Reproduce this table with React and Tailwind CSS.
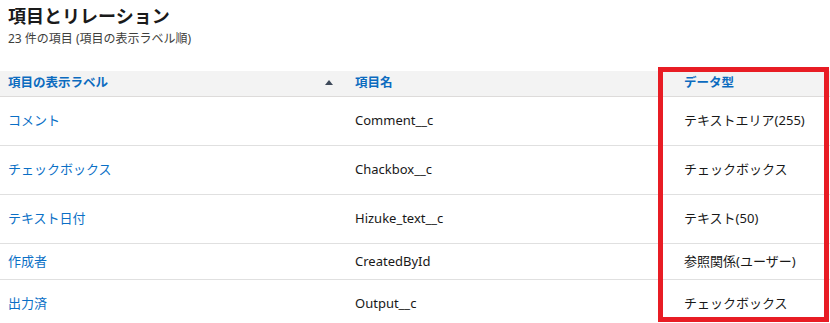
export default function App() {
  const rows = [
    { label: "コメント", api: "Comment__c", type: "テキストエリア(255)", h: "h-[49px]" },
    { label: "チェックボックス", api: "Chackbox__c", type: "チェックボックス", h: "h-[49px]" },
    { label: "テキスト日付", api: "Hizuke_text__c", type: "テキスト(50)", h: "h-[49px]" },
    { label: "作成者", api: "CreatedById", type: "参照関係(ユーザー)", h: "h-[36px]" },
    { label: "出力済", api: "Output__c", type: "チェックボックス", h: "h-[48px]" },
  ];
  return (
    <div
      className="relative w-[830px] h-[323px] overflow-hidden bg-white text-[#181818]"
      style={{ fontFamily: '"Noto Sans", "Noto Sans CJK JP", sans-serif' }}
    >
      <div className="px-2 pt-[4px]">
        <h1 className="text-[18px] leading-[24px] font-bold text-[#1a1a1a]">項目とリレーション</h1>
        <p className="text-[12px] leading-[16px] mt-[3px] text-[#3e3e3c]">23 件の項目 (項目の表示ラベル順)</p>
      </div>
      <div className="mt-[24px]">
        <div className="grid grid-cols-[347px_329px_1fr] h-[26px] bg-[#f3f3f3] border-b border-[#dddbda] items-center text-[12.5px] font-bold text-[#0b6bbf]">
          <div className="flex items-center justify-between pl-2 pr-[14px]">
            <span>項目の表示ラベル</span>
            <svg width="8" height="5" viewBox="0 0 8 5" className="mb-[2px]">
              <path d="M0 5 L4 0 L8 5 Z" fill="#3e4a5a" />
            </svg>
          </div>
          <div className="pl-2">項目名</div>
          <div className="pl-2">データ型</div>
        </div>
        {rows.map((r, i) => (
          <div
            key={i}
            className={`grid grid-cols-[347px_329px_1fr] items-center ${r.h} border-b border-[#e0e0e0] text-[13px]`}
          >
            <div className="pl-2 text-[#0a6fc6]">{r.label}</div>
            <div className="pl-2">{r.api}</div>
            <div className="pl-2">{r.type}</div>
          </div>
        ))}
      </div>
      <div className="absolute left-[658px] top-[67px] w-[171px] h-[255px] border-[5px] border-[#e81c24] pointer-events-none" />
    </div>
  );
}
